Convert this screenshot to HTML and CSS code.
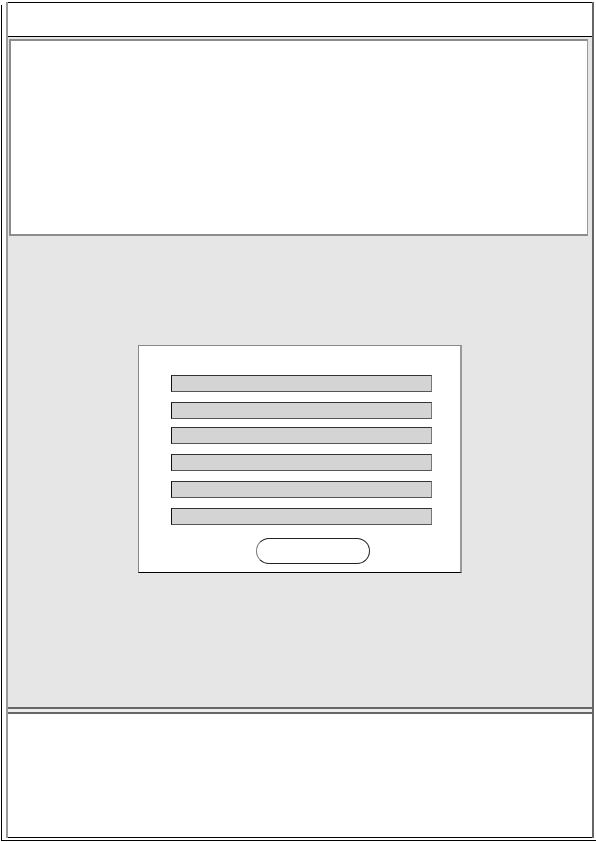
FILE: index.html
```html
<!DOCTYPE html>
<html lang="en">

<head>
    <meta charset="UTF-8">
    <meta name="viewport" content="width=device-width, initial-scale=1.0">
    <title>Wireframe</title>
    <link rel="stylesheet" href="styles.css">
</head>

<body>
    <div class="sheet">
        <div class="window">
            <div class="topbar"></div>

            <div class="main">
                <div class="banner"></div>

                <div class="dialog">
                    <div class="field"></div>
                    <div class="field gap-sm"></div>
                    <div class="field"></div>
                    <div class="field"></div>
                    <div class="field"></div>
                    <div class="field last"></div>
                    <div class="pill"></div>
                </div>
            </div>

            <div class="divider"></div>

            <div class="footer"></div>
        </div>
    </div>
</body>

</html>
```

FILE: styles.css
```css
body {
    margin: 0;
    background-color: #fff;
    font-family: "Liberation Sans", Arial, sans-serif;
}

.sheet {
    display: flex;
    flex-direction: column;
    margin: 5px 0 0 1px;
    width: 594px;
    height: 835px;
    border-left: 1px solid #000;
    border-bottom: 1px solid #000;
}

.window {
    display: flex;
    flex-direction: column;
    box-sizing: border-box;
    margin: -3px 0 0 4px;
    width: 588px;
    border-left: 2px solid #9a9a9a;
    border-right: 2px solid #666;
    background-color: #fff;
}

.topbar {
    box-sizing: border-box;
    height: 35px;
    border-top: 1px solid #000;
    border-bottom: 1px solid #000;
}

.main {
    box-sizing: border-box;
    height: 672px;
    padding: 2px 4px 0 1px;
    background-color: #e6e6e6;
    border-bottom: 2px solid #666;
}

.banner {
    box-sizing: border-box;
    height: 197px;
    border: 2px solid #8c8c8c;
    border-right: 1px solid #999;
    background-color: #fff;
}

.dialog {
    box-sizing: border-box;
    width: 324px;
    margin: 109px 0 0 129px;
    padding: 29px 0 8px 32px;
    border: 1px solid #888;
    border-right: 2px solid #999;
    border-bottom: 1px solid #000;
    background-color: #fff;
}

.field {
    box-sizing: border-box;
    width: 261px;
    height: 17px;
    margin-bottom: 10px;
    background-color: #d4d4d4;
    border-top: 1px solid #333;
    border-left: 1px solid #111;
    border-bottom: 1px solid #555;
    border-right: 1px solid #777;
}

.field.gap-sm {
    margin-bottom: 8px;
}

.field.last {
    margin-bottom: 13px;
}

.pill {
    box-sizing: border-box;
    width: 114px;
    height: 26px;
    margin-left: 85px;
    border: 1px solid #222;
    border-left-color: #777;
    border-radius: 13px;
    background-color: #fff;
}

.divider {
    height: 3px;
    background-color: #ececec;
}

.footer {
    box-sizing: border-box;
    height: 126px;
    border-top: 2px solid #666;
    border-bottom: 1px solid #000;
}
```
